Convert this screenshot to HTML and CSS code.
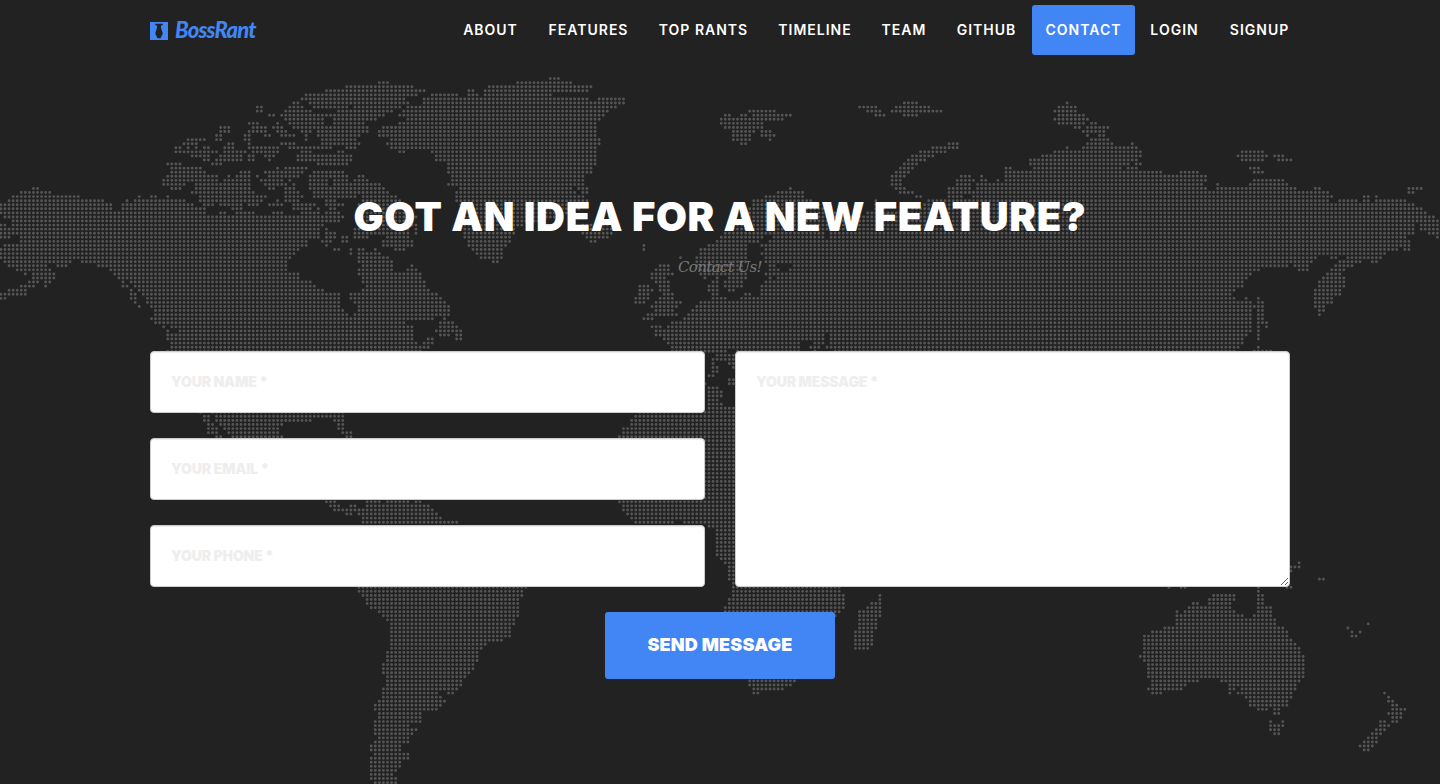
FILE: index.html
```html
<!DOCTYPE html>
<html lang="en">
<head>
<meta charset="utf-8">
<title>BossRant</title>
<link rel="stylesheet" href="styles.css">
</head>
<body>
<svg class="map" viewBox="0 0 1440 784" aria-hidden="true"><path id="dots" class="map-dots"/></svg>
<div class="page">
  <header class="navbar">
    <a class="brand" href="#">
      <svg class="brand-icon" viewBox="0 0 18 18"><path fill="#4285f4" d="M0 0h18v18H0z"/><path fill="#222" d="M5.2 1.8h7.6v1.2l-1.6.6-.3 2 1.9 5.9-2.3 4.7h-3l-2.3-4.7 1.9-5.9-.3-2-1.6-.6z"/></svg>
      <span class="brand-name">BossRant</span>
    </a>
    <nav class="menu">
      <a href="#">ABOUT</a>
      <a href="#">FEATURES</a>
      <a href="#">TOP RANTS</a>
      <a href="#">TIMELINE</a>
      <a href="#">TEAM</a>
      <a href="#">GITHUB</a>
      <a class="active" href="#">CONTACT</a>
      <a href="#">LOGIN</a>
      <a href="#">SIGNUP</a>
    </nav>
  </header>
  <main class="contact">
    <h2 class="heading">GOT AN IDEA FOR A NEW FEATURE?</h2>
    <h3 class="subheading">Contact Us!</h3>
    <form class="form">
      <div class="fields">
        <input class="control" type="text" placeholder="YOUR NAME *">
        <input class="control" type="email" placeholder="YOUR EMAIL *">
        <input class="control" type="tel" placeholder="YOUR PHONE *">
      </div>
      <textarea class="control message" placeholder="YOUR MESSAGE *"></textarea>
      <button class="send" type="button">SEND MESSAGE</button>
    </form>
  </main>
</div>
<script src="map.js"></script>
</body>
</html>
```
FILE: styles.css
```css
* { box-sizing: border-box; }

body {
  margin: 0;
  height: 784px;
  overflow: hidden;
  background: #222;
  color: #fff;
  font-family: Inter, "Open Sans", sans-serif;
}

.map {
  position: absolute;
  top: 0;
  left: 0;
  width: 1440px;
  height: 784px;
}

.map-dots {
  fill: none;
  stroke: #555;
  stroke-width: 2.9;
  stroke-linecap: round;
}

.page {
  position: relative;
  width: 1140px;
  margin: 0 auto;
}

.navbar {
  display: flex;
  justify-content: space-between;
  height: 60px;
  padding-top: 5px;
  margin-right: -15px;
}

.brand {
  display: flex;
  align-items: center;
  gap: 7px;
  height: 50px;
  color: #4285f4;
  text-decoration: none;
}

.brand-icon { width: 18px; height: 18px; margin-top: 2px; }

.brand-name {
  font: italic 900 22px/50px Lato, sans-serif;
  letter-spacing: -0.8px;
}

.menu {
  display: grid;
  grid-template-columns: 85px 111px 119px 104px 74px 91px 103px 79px 91px;
}

.menu a {
  height: 50px;
  border-radius: 3px;
  color: #fff;
  font-size: 14px;
  font-weight: 600;
  line-height: 50px;
  letter-spacing: 1px;
  text-align: center;
  text-decoration: none;
  white-space: nowrap;
}

.menu .active { background: #4285f4; }

.contact { padding-top: 135px; }

.heading {
  margin: 0;
  font-size: 40px;
  font-weight: 900;
  line-height: 44px;
  letter-spacing: 0.65px;
  text-align: center;
  white-space: nowrap;
}

.subheading {
  margin: 16px 0 72px;
  color: #777;
  font: italic 400 15px/24px "DejaVu Serif", serif;
  letter-spacing: -0.6px;
  text-align: center;
}

.form {
  display: grid;
  grid-template-columns: 555px 555px;
  column-gap: 30px;
  row-gap: 25px;
}

.fields {
  display: flex;
  flex-direction: column;
  gap: 25px;
}

.control {
  display: block;
  width: 100%;
  height: 62px;
  padding: 19px 20px 21px;
  border: 1px solid #ccc;
  border-radius: 4px;
  background: #fff;
  box-shadow: inset 0 1px 1px rgba(0, 0, 0, 0.075);
  font: 900 14px/20px Inter, sans-serif;
  letter-spacing: -0.15px;
}

.control::placeholder { color: #eee; opacity: 1; }

.message { height: 236px; padding: 20px; resize: both; }

.send {
  grid-column: 1 / -1;
  justify-self: center;
  width: 230px;
  height: 67px;
  padding: 0 0 2px;
  border: 0;
  border-radius: 3px;
  background: #4285f4;
  color: #fff;
  font: 900 18px/24px Inter, sans-serif;
  letter-spacing: 0.15px;
}
```
FILE: map.js
```js
// Dotted world map. Each sheet holds rows of dot runs, measured in thirds of a
// pixel from the sheet's left edge, and is snapped to the dot grid.
const PITCH = 4.0695, LEFT = 0.9, TOP = 78.6;

const sheets = [
{ x: 0, rows: `
2:1040-1080
3:980-1080
4:918-1080
5:905-1080
6:880-893,930-1080
7:870-905,940-1040,1064-1080
8:858-930,1027-1080
9:809-821,845-1080
10:858-968,1000-1080
11:748-772,833,870-970,1000-1080
12:662-687,760-797,821-845,882-1080
13:662-687,748-797,833-858,905-935,955-1080
14:650-662,736-748,797-809,845-882,918,955-1080
15:565-615,650-662,736-748,918,968-1060
16:553-590,687-700,748,845-880,968-1060
17:528-540,565,590,613-625,675-700,748-833,870-990,1040-1065
18:528-650,675-735,760-833,905-930,1015-1030
19:577-630,662-725,748-760,797-821,893-1050
20:613-625,650-725,748-760,809,893-1050
21:503-540,638-662,955-1040
22:515-600,833,857-918
23:515-613,724-748,797-845,857-905,943-1030
24:503-650,687,711-748,772,809-890,930-1040
25:491-650,675-750,785-845,870,930-975,1000-1040
26:491-550,590-748,797-858,882,930-975,1000-1080
27:515-540,590-748,809-821,858-882,930-1080
28:577-760,858-893,943-1080
29:600-797,858-905,943-1060
30:600-785,833,858-893,980-1005
31:613-640,660-725,745-772,809-845,880-945,980-1030
32:700-725,880-930,955,990-1005
33:660-680,705-765,821-845,905-940,955,980-1015
7:772-785
8:772-785
27:101-113
28:64-150
29:40-235,418,455-467,503
30:28-308,382,406-555
31:3-333,370-580
32:3-333,370-615
33:3-615
34:16-1030
35:40-1020
36:3-16,40-970
37:3-28,40-955,980
38:3-955,980-1005
39:3-28,64-955,980-1005,1035,1070
40:64-920,968-993,1027-1040
41:16-920,980
42:3-895,1005-1017,1052,1076
43:3-880,1052,1076
44:3-870
45:16-210,247-858
46:28-137,174-200,296-858
47:52-150,333-858
48:76,101-162,345-895
49:101-162,357-895
50:89-113,137-150,370,394-930
51:64-101,137,370-382,406-945
52:28-76,394,418-968
53:3-76,394-406,430-1015,1052-1080
54:3-16,394-406,443-1015,1052-1080
55:406,443-1015
56:418,455-1015
57:467-1027
58:467-1040
59:455-1080
60:467-1080
61:491,515-1080
62:503,540-1080
63:503-528,540-1080
64:503-1080
65:515-1080
66:515-1080
67:503-1080` },
{ x: 340, rows: `
0:628-655
1:116-145,530-695
2:18-218,445-755
3:6-255,385-400,433-745
4:0-230,274-352,385-412,433-635
5:0-195,250-745,775-853
6:0-205,250-853
7:0-25,43-180,200-828
8:0-155,190-803
9:0-130,180-790
10:0-108,200-778
11:0-72,180-770
12:0-85,128-770
13:0-85,116-770
14:0-45,116-770
15:0-35,153-778
16:18-55,140-778
17:18-45,153-765
18:6,180-192,274-770
19:6-35,286-770
20:6-35,286-770
21:6-20,323-765
22:323-755
23:6,323-755
24:6-20,55-70,335-730
25:6-20,43-85,335-730
26:6-72,85-120,323-730
27:6-130,359-695,720-740
28:6-145,347-700,730-740
29:6-35,65-165,347-730
30:70-180,347-735
31:6,60-195,359-735
32:60-205,359-720
33:60-205,359-700
34:6,60-225,359-640
35:60-218,370-590
36:60-230,370-550,725-800
37:43-205,226,370-525,720-828
38:43-205,226,372-520,725-815
39:6,43-80,140-205,372-510,738-803
40:6-20,128-218,384-510,750-765
41:128-218,384-498,910
42:30,55-70,104,165-192,396-485,910
43:30,55-120,408-485
44:55-145,420-485
45:55-155,457-470
46:67-155,215
47:55-155,205-230
48:55-240
49:67-240
50:67-252
51:80-252
52:67-265
53:30-45,67-290
54:30-45,60-300
55:43-315
56:55-325
57:6,55-325
58:6-20,43-325
59:0-275,315
60:0-192,300-340
61:0-215,300-350
62:0-215,288-365
63:0-215,300-325,350-365
64:0-215,262-275,350-365
65:0-228,250-275
66:0-265
67:0-240` },
{ x: 600, rows: `
6:910-950
7:775-830,885-985
8:445-525,800-840,873-1025
9:373-388,421-440,457-575,825-855,910-950
10:360-550
11:360-490
12:373-485
13:397-460,483-510
14:397-450,483-525
15:397-448,508
16:421-438,1043-1075
17:995-1075
18:960-1035
19:935-1000
20:922-975
21:910-950
22:897-937,1215-1230
23:885-925,1215-1260
24:873-912,1080-1110,1143,1215-1260
25:873-905,1070-1120,1143-1155,1190,1215-1260
26:873-905,1070-1110,1130-1205,1230-1260
27:570,885-912,1045-1110,1130-1260
28:532-608,897-937,1045-1260
29:495-608,947-962,1045-1090,1118-1260
30:457-630,830,985-1260
31:457-660,825,970-1260
32:450-680,830-850,935-1260
33:440-700,800-1260
34:430-720,740-1260
35:420-1260
36:400-1260
37:385-1260
38:373-665,690-1260
39:360-485,520-670,690-1260
40:348-470,508-1260
41:325-440,483-1260
42:300-440,495-1260
43:300-440,483-1260
44:240,290-440,495-1260
45:290-440,495-1260
46:178-205,290-430,508-525,580-1260
47:165-205,300-430,508-530,570-1260
48:153-215,300-440,495-1260
49:153-190,313,350,385-440,508,530-1260
50:165-205,338-350,373-430,495-1260
51:116-145,178-205,325-350,373-425,483-1260
52:116-155,178-205,325-350,385-400,483-1260
53:116-145,190-218,338-350,435-450,483-1260
54:104-145,178-218,338-375,420-1260
55:104-135,165-240,300-1260
56:153-230,288-1260
57:165-218,275-1260
58:140-230,262-1260
59:128-155,250-1260
60:213-1260
61:153-180,205-1260
62:165-1260
63:165-180,190-665,690-1260
64:190-665,690-1260
65:205-600,640-665,690-1260
66:215-600,630-655,680-1260
67:215-375,410-600,640,700-1260` },
{ x: 1000, rows: `
6:200
7:175-225
8:163-225
9:175-250
10:163-262
11:175-250,275-288
12:225-238,262-322
13:250-312
14:262,299-312
15:275-322
16:262-335,396
17:200,250-410
18:163-420,725-790
19:127-420,713-800,825-850
20:90-395,408,725-790,835-875
21:90-385,408-420
22:15-30,100-360,385-408,748-775
23:15-485,540-595,762-785
24:15-615
25:15-615,762-850
26:0-20,40-605,652,750-860
27:0-615,652-885,945-960,1225-1265
28:0-985,1225-1240
29:0-995,1092-1105,1130
30:0-985,1018-1070,1092-1105,1130-1215
31:0-1080,1092-1105,1118-1240
32:0-1265
33:0-1275
34:0-1300
35:0-1315
36:0-1240,1260-1315
37:0-1240,1265-1315
38:0-1240,1290-1315
39:0-1220,1310
40:0-1228
41:0-1228
42:0-1190,1215-1228
43:0-1155
44:0-945,995-1005,1043-1140
45:0-935,1018-1080,1118-1130
46:0-860,885-920,1006-1055
47:0-775,897-920,995-1030
48:0-750,982-1020
49:0-738,970-1030
50:0-725,957-1030
51:0-725,957-1030
52:0-700,945-1018
53:0-690,945-1018
54:0-700,738,775,945-995
55:0-750,775-785,945-995
56:0-750,762-785,945-970
57:0-750,775-785,957-970
58:0-750,775-785,957
59:0-750,775-785
60:0-750,775-795
61:0-750,775,797
62:0-750,775
63:0-735,775
64:0-725,775
65:0-725
66:0-712,775
67:0-700,762-810` },
{ x: 140, rows: `
82:180,217-610
83:193-205,230-610
84:193-205,230-515,585-610
85:205-217,242-425,597-610
86:205-230,255-415,597-610
87:205-230,267-415,610-632
88:230-242,279-425,620-632
104:558-583,682-720,743-805,830-840
105:570-595,632-645,682-865
106:583-875
107:620-632,657-888
108:670-900
109:670-950
125:657-1160
126:657-1145
127:670-1145
128:682-1135
129:682-1135
130:695-1135
131:718-1135
132:730-1130
133:743-1120
134:755-1120
135:755-1110
136:755-1110
137:755-1110
138:755-1085
139:755-1035
140:755-1022
141:743-1010
142:743-1010
143:743-1010
144:730-998
145:730-998
146:730-985
147:743-975
148:743-965
149:743-960
150:730-950
151:730-890,925-937
152:730-900
153:718-912
154:706-900
155:706-888
156:718-840
157:718-840
158:706-840
159:706-805
160:706-828
161:706-815
162:718-805
163:706-805
164:693-780
165:693-780
166:706-805
167:693-805
168:693-780
169:693-780
170:693-768
171:693-755
172:693-768
173:706-768` },
{ x: 600, rows: `
68:350-410
69:338-410
70:338,387-410
71:338-350,400
72:338-350
73:325-338
74:387-410
75:315,387-410
76:325-350
77:325-362
78:325-362
79:325-350
80:325-362
81:325-410
82:118-410
83:105-410
84:93-410
85:93-410
86:68-410
87:68-410
88:55-410
89:315-410
90:315-410
91:315-410
92:315-410
93:315-410
94:315-410
95:315-410
96:315-410
97:315-410
98:315-410
99:315-410
100:315-410
101:315-410
102:315-410
103:315-410
104:55-410
105:68-410
106:68-410
107:80-410
108:93-410
109:105-220,252-410
110:325-410
111:350-410
112:350-410
113:350-410
114:350-410
115:350-410
116:350-410
117:350-410
118:362-410
119:375-410
120:387-410
121:387-410
122:387-410
123:387-410
124:400-410
125:400-720
126:400-720
127:400-730,838
128:387-730,838
129:387-730,813-838
130:375-730,800-838
131:375-720,776-838
132:706,776-838
133:776-825
134:776-825
135:776-825
136:765-815
137:765-815
138:765-815
139:765-815
140:765-802
148:447-585
149:447-570
150:460-550
151:460-472` },
{ x: 1110, rows: `
119:565
120:541-565
121:541
123:628-640
125:176,212-225,444,530-541
126:444
127:310-372,444-457
128:298-372,444-457
129:249-262,298-360,444-457
130:237-360,444-482
131:200,225-372,444-482
132:200-395,432-482
133:200-494
134:200-494,773
135:163-518,713
136:127-530,725,748
137:102-530,725-737
138:102-541
139:102-555
140:102-567
141:102-567
142:90-579
143:102-579
144:114-579
145:114-579
146:114-579
147:114-579
148:127-262,335-567
149:127-225,359-555
150:114-212,359-372,395-555
151:127-152,359,383-541,822
152:408-541,834
153:420-530,834-846
154:420-530,846-858
155:444-470,493-505,846-882
156:493-505,834-870
157:846-870
158:481,517,809-821,846-858
159:481-517,809-834
160:481-505,797-821
161:493-505,785-809
162:773-797
163:761-797
164:748-785
165:761-773` }
];

const dots = new Set();
for (const sheet of sheets) {
  const column = v => Math.round((sheet.x + v / 3 - LEFT) / PITCH);
  for (const line of sheet.rows.trim().split("\n")) {
    const [row, runs] = line.split(":");
    for (const run of runs.split(",")) {
      const [from, to = from] = run.split("-").map(Number);
      for (let c = column(from); c <= column(to); c++) dots.add(c + " " + row);
    }
  }
}

let path = "";
for (const dot of dots) {
  const [c, r] = dot.split(" ").map(Number);
  path += `M${(LEFT + c * PITCH).toFixed(2)} ${(TOP + r * PITCH).toFixed(2)}h0`;
}
document.getElementById("dots").setAttribute("d", path);
```
